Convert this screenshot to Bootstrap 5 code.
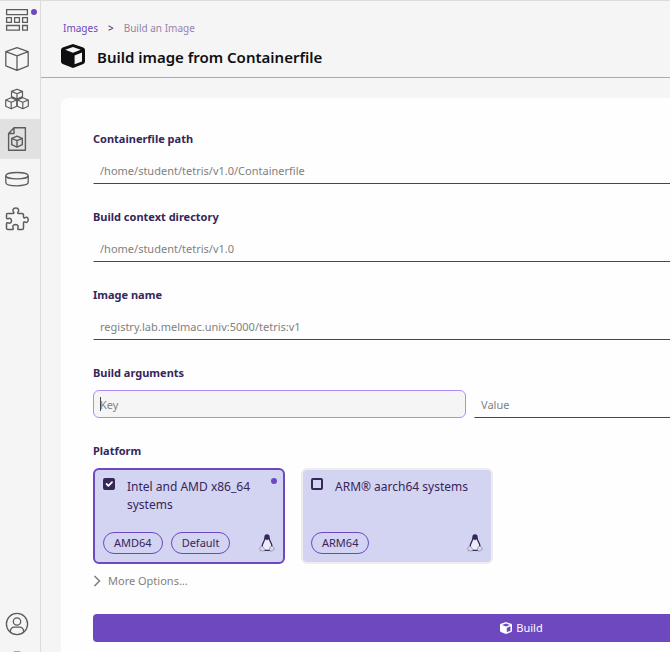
<!DOCTYPE html>
<html lang="en">
<head>
<meta charset="utf-8">
<meta name="viewport" content="width=device-width, initial-scale=1">
<title>Build image from Containerfile</title>
<link href="https://cdn.jsdelivr.net/npm/bootstrap@5.3.0/dist/css/bootstrap.min.css" rel="stylesheet">
<style>
:root { --purple: #6d48bf; --ink: #36265a; }
body { font-family: "Noto Sans", sans-serif; font-size: 11px; line-height: 20px; background: #f5f5f5; color: var(--ink); border-top: 1px solid #dcdcdc; }
.side-nav { width: 41px; background: #f5f5f5; border-right: 1px solid #dcdcdc; }
.side-link { height: 40px; padding-right: 6px; color: #5c5c5c; position: relative; }
.side-link.first { height: 38px; }
.side-link.current { background: #e1e1e1; }
.side-dot { position: absolute; top: 8px; right: 3px; width: 6px; height: 6px; border-radius: 50%; background: var(--purple); }
.side-link svg, .page-head svg { display: block; }
.side-foot .side-link:last-child { height: 8px; padding-top: 1px; overflow: hidden; }
.page-head { height: 77px; padding: 17px 20px 0; border-bottom: 1px solid #aaabac; }
.crumbs { font-size: 10px; color: #9384ab; gap: 10px; padding-left: 2px; }
.crumbs a { color: var(--purple); }
.crumbs .sep { color: var(--ink); }
.title-row { color: #0f0f11; margin-top: 5px; }
.page-head h1 { font-size: 15px; line-height: 24px; font-weight: 600; padding-top: 2px; }
.panel { margin: 20px 20px 0; min-width: 921px; padding: 30px 32px; background: #fefefe; border-radius: 8px; }
.field { margin-bottom: 22px; }
.field-label { display: block; font-size: 11px; line-height: 22px; font-weight: 700; margin: 0 0 6px; color: var(--ink); }
.line-input { height: 28px; padding: 0 6px; font-size: 11px; line-height: 20px; color: #818181; background: transparent; border: 1px solid transparent; border-bottom-color: #464649; border-radius: 0; }
.line-input::placeholder { color: #818181; opacity: 1; }
.line-input.active { background: #f5f5f5; border-color: #ad8bfa; border-radius: 6px; }
.key-wrap { flex: 0 0 373px; }
.caret { position: absolute; left: 7px; top: 7px; width: 1px; height: 14px; background: #464649; }
.pair-action { width: 28px; height: 28px; color: var(--ink); }
.platform { width: 192px; height: 96px; padding: 8px; background: #d3d3f2; border: 2px solid #ededed; border-radius: 6px; position: relative; }
.platform.selected { border-color: var(--purple); }
.platform .form-check-input { width: 12px; height: 12px; margin: 0; border: 2px solid var(--ink); border-radius: 2px; background-color: transparent; flex: none; }
.platform .form-check-input:checked { background-color: var(--ink); background-size: 12px; background-origin: border-box; }
.platform label { font-size: 12px; line-height: 18px; }
.platform .tag { height: 22px; line-height: 20px; padding: 0 10px; border: 1px solid var(--purple); border-radius: 11px; }
.selected-dot { position: absolute; top: 8px; right: 6px; width: 6px; height: 6px; border-radius: 50%; background: var(--purple); }
.more { font-size: 11px; line-height: 20px; color: #818181; margin: 7px 0 23px; gap: 7px; }
.btn-build { height: 28px; font-size: 11px; line-height: 20px; color: #fff; background: var(--purple); border-radius: 4px; gap: 4px; }
.btn-build:hover { color: #fff; background: #5d3bab; }
</style>
<script src="https://cdn.jsdelivr.net/npm/bootstrap@5.3.0/dist/js/bootstrap.bundle.min.js" defer></script>
</head>
<body class="d-flex vh-100 overflow-hidden">
<svg class="d-none" aria-hidden="true">
  <symbol id="cube-solid" viewBox="0 0 24 24"><path fill="currentColor" fill-rule="evenodd" d="M12 0 22.300 3.600Q24 4.300 24 6V17.600Q24 19.400 22.300 20.100L12 24 1.700 20.100Q0 19.400 0 17.600V6Q0 4.300 1.700 3.600ZM12 2.900 4.200 5.800 12 8.800 19.800 5.800ZM13.600 11.500V20.200L21 17.400V8.500Z"/></symbol>
  <symbol id="tux" viewBox="0 0 16 18"><path fill="#fff" fill-opacity=".55" d="M6 5.500 8 7l2-1.500 2.200 6.500-1.200 4H5.200L3.600 12Z"/><path fill="#d9d9ec" stroke="#8d84a5" stroke-width=".7" d="M3 11.800 6 15.500 5.300 17 1 16.600.7 13.800ZM13 11.800l-2.200 1.400-.2 3.800 1.400.3 3.400-1.800-.8-2Z"/><path fill="none" stroke="#36265a" stroke-width="1.300" d="M5.800 4.300Q5.700 6.300 4.500 8.100 3.200 10.100 3.200 12.300M10.200 4.300Q10.400 6.300 11.600 8.100 12.900 10 12.900 12.300M5.800 16.300H10.600"/><path fill="#36265a" d="M5.300 3Q5.400.3 8 .3 10.600.3 10.700 3V6.500L9.700 5.200 8 6 6.300 5.200 5.300 6.500Z"/></symbol>
</svg>

<nav class="side-nav d-flex flex-column justify-content-between flex-shrink-0" aria-label="Main">
  <div>
    <a href="#" class="side-link first d-flex align-items-center justify-content-center" aria-label="Dashboard"><svg width="24" height="24" viewBox="0 0 24 24" fill="none" stroke="currentColor" stroke-width="1.300"><path d="M1.600 1.700h20.800v5H1.600ZM1.600 9.700h4.800v4.600H1.600ZM9.600 9.700h4.800v4.600H9.600ZM17.600 9.700h4.800v4.600h-4.800ZM1.600 17.500h12.800v4.700H1.600ZM17.600 17.500h4.800v4.700h-4.800Z"/></svg><span class="side-dot"></span></a>
    <a href="#" class="side-link d-flex align-items-center justify-content-center" aria-label="Containers"><svg width="24" height="24" viewBox="0 0 24 24" fill="none" stroke="currentColor" stroke-width="1.300" stroke-linejoin="round"><path d="M12 .7 23.200 4.700V18.800L12 23.300.8 18.800V4.700ZM.8 4.700 12 8.900 23.200 4.700M12 8.900V23.300"/></svg></a>
    <a href="#" class="side-link d-flex align-items-center justify-content-center" aria-label="Pods"><svg width="24" height="24" viewBox="0 0 24 24" fill="none" stroke="currentColor" stroke-width="1.200" stroke-linejoin="round"><path d="M12 2.200 17.500 4.400V9.600L12 12 6.500 9.600V4.400ZM6.500 4.400 12 6.700 17.500 4.400M12 6.700V12M6.200 10.800 11.700 13V19.300L6.200 21.700.7 19.300V13ZM.7 13 6.200 15.300 11.700 13M6.200 15.300V21.700M17.800 10.800 23.300 13V19.300L17.800 21.700 12.300 19.300V13ZM12.300 13 17.800 15.300 23.300 13M17.800 15.300V21.700"/></svg></a>
    <a href="#" class="side-link current d-flex align-items-center justify-content-center" aria-label="Images" aria-current="page"><svg width="24" height="24" viewBox="0 0 24 24" fill="none" stroke="currentColor" stroke-width="1.400" stroke-linejoin="round"><path d="M9 .7H20.400V23.300H3.600V6.500ZM9 .7V6.500H3.600M12 9.200 17.300 11.300V17.700L12 20.200 6.700 17.700V11.300ZM6.700 11.300 12 13.700 17.300 11.300M12 13.700V20.200"/></svg></a>
    <a href="#" class="side-link d-flex align-items-center justify-content-center" aria-label="Volumes"><svg width="24" height="24" viewBox="0 0 24 24" fill="none" stroke="currentColor" stroke-width="1.300"><ellipse cx="12" cy="8.700" rx="11.200" ry="3.200"/><path d="M.8 8.700V15.500C.8 19.900 23.200 19.900 23.200 15.500V8.700"/></svg></a>
    <a href="#" class="side-link d-flex align-items-center justify-content-center" aria-label="Extensions"><svg width="24" height="24" viewBox="0 0 24 24" fill="none" stroke="currentColor" stroke-width="1.500" stroke-linejoin="round"><path d="M2.600 6.600H7.200Q9.200 6.600 8.900 5.500 7.600 4.300 8 2.800 8.600 1.100 10.800 1.100 13.100 1.100 13.600 2.800 14 4.300 12.700 5.500 12.300 6.600 14.400 6.600H17Q18.500 6.600 18.500 8.100V9.500Q18.500 11.300 19.700 10.800 22.900 9 23.200 12.800 22.900 16.500 19.700 14.900 18.500 14.400 18.500 16.100V21Q18.500 22.600 17 22.600H14.200Q12.200 22.600 12.800 21.300 14.300 17.800 10.500 17.600 6.800 17.800 8.200 21.300 8.700 22.600 6.800 22.600H3.100Q1.500 22.600 1.500 21V17.200Q1.600 15.200 2.900 15.800 6.300 17.100 6.500 13.700 6.300 10.400 2.900 11.700 1.600 12.100 1.500 10.500V8Q1.500 6.600 2.600 6.600Z"/></svg></a>
  </div>
  <div class="side-foot">
    <a href="#" class="side-link d-flex align-items-center justify-content-center" aria-label="Accounts"><svg width="24" height="24" viewBox="0 0 24 24" fill="none" stroke="currentColor" stroke-width="1.300"><circle cx="12" cy="12" r="10.600"/><circle cx="12" cy="9.500" r="3.700"/><path d="M5.300 20Q5.400 15.100 9.500 15.100H14.500Q18.600 15.100 18.700 20"/></svg></a>
    <a href="#" class="side-link d-flex justify-content-center align-items-start" aria-label="Settings"><svg width="24" height="24" viewBox="0 0 24 24" fill="none" stroke="currentColor" stroke-width="1.400"><path d="M9.500 9V7.300H14.500V9L18 11V17L12 22 6 17V11Z"/></svg></a>
  </div>
</nav>

<main class="flex-grow-1 overflow-hidden">
  <header class="page-head">
    <nav class="crumbs d-flex" aria-label="Breadcrumb"><a href="#" class="text-decoration-none">Images</a><span class="sep">&gt;</span><span>Build an Image</span></nav>
    <div class="title-row d-flex align-items-center gap-2">
      <svg width="24" height="24" class="me-1"><use href="#cube-solid"/></svg>
      <h1 class="m-0">Build image from Containerfile</h1>
    </div>
  </header>

  <form class="panel">
    <div class="field"><label class="field-label" for="path">Containerfile path</label><input id="path" class="form-control line-input" value="/home/student/tetris/v1.0/Containerfile"></div>
    <div class="field"><label class="field-label" for="context">Build context directory</label><input id="context" class="form-control line-input" value="/home/student/tetris/v1.0"></div>
    <div class="field"><label class="field-label" for="name">Image name</label><input id="name" class="form-control line-input" value="registry.lab.melmac.univ:5000/tetris:v1"></div>
    <div class="field">
      <label class="field-label" for="key">Build arguments</label>
      <div class="d-flex gap-2">
        <div class="key-wrap position-relative"><input id="key" class="form-control line-input active" placeholder="Key"><span class="caret"></span></div>
        <input class="form-control line-input flex-grow-1" placeholder="Value" aria-label="Value">
      </div>
    </div>
    <div class="field-label">Platform</div>
    <div class="d-flex gap-3">
      <div class="platform selected d-flex flex-column justify-content-between">
        <div class="d-flex gap-2"><input type="checkbox" id="amd" class="form-check-input me-1" checked><label for="amd" class="pe-3">Intel and AMD x86_64 systems</label></div>
        <span class="selected-dot"></span>
        <div class="d-flex gap-2 align-items-center"><span class="tag">AMD64</span><span class="tag">Default</span><svg width="16" height="18" class="ms-auto"><use href="#tux"/></svg></div>
      </div>
      <div class="platform d-flex flex-column justify-content-between">
        <div class="d-flex gap-2"><input type="checkbox" id="arm" class="form-check-input me-1"><label for="arm">ARM® aarch64 systems</label></div>
        <div class="d-flex gap-2 align-items-center"><span class="tag">ARM64</span><svg width="16" height="18" class="ms-auto"><use href="#tux"/></svg></div>
      </div>
    </div>
    <button type="button" class="btn border-0 p-0 more d-flex align-items-center"><svg width="8" height="12" viewBox="0 0 8 12" fill="none" stroke="currentColor" stroke-width="1.600"><path d="M1.500 1 6.500 6 1.500 11"/></svg>More Options...</button>
    <button type="submit" class="btn border-0 p-0 btn-build w-100 d-flex align-items-center justify-content-center"><svg width="12" height="12"><use href="#cube-solid"/></svg>Build</button>
  </form>
</main>
</body>
</html>
